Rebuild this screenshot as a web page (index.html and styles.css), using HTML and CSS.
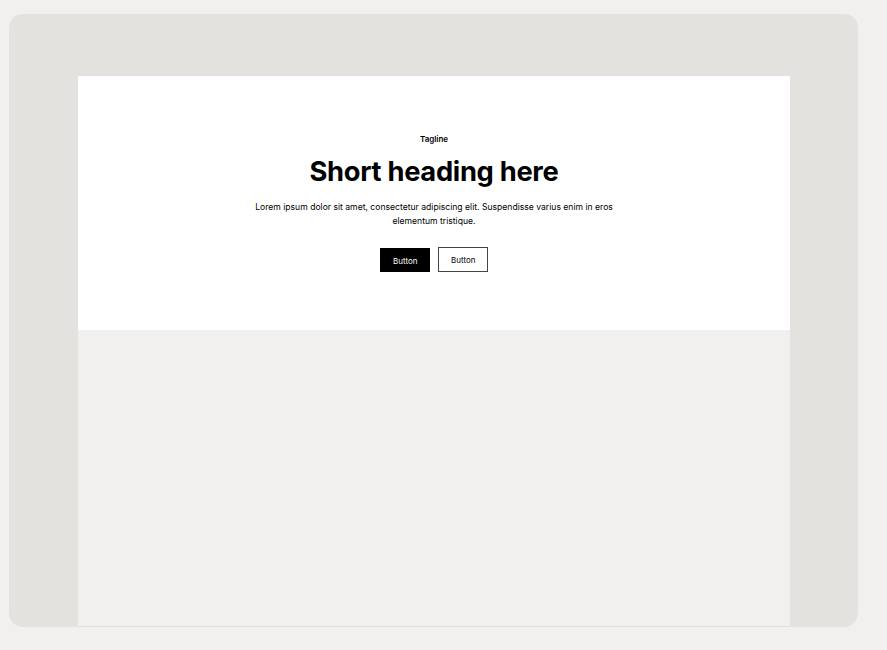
FILE: index.html
```html
<!DOCTYPE html>
<html>
<head>
<meta charset="utf-8">
<link rel="stylesheet" href="styles.css">
</head>
<body>
<div class="frame">
  <div class="page">
    <section class="hero">
      <p class="tagline">Tagline</p>
      <h1 class="title">Short heading here</h1>
      <p class="lead">Lorem ipsum dolor sit amet, consectetur adipiscing elit. Suspendisse varius enim in eros elementum tristique.</p>
      <div class="actions">
        <button class="btn btn-primary">Button</button>
        <button class="btn btn-outline">Button</button>
      </div>
    </section>
    <div class="rest"></div>
  </div>
</div>
</body>
</html>
```
FILE: styles.css
```css
html, body {
  margin: 0;
  padding: 0;
  background: #f1f0ee;
  font-family: Inter, "Noto Sans", sans-serif;
}
.frame {
  margin: 14px 29px 0 9px;
  height: 613px;
  background: #e3e2df;
  border-radius: 14px;
  padding: 62px 68px 0 69px;
  box-sizing: border-box;
  display: flex;
}
.page {
  flex: 1;
  display: flex;
  flex-direction: column;
}
.hero {
  background: #ffffff;
  height: 254px;
  display: flex;
  flex-direction: column;
  align-items: center;
  box-sizing: border-box;
  padding-top: 57px;
  text-align: center;
}
.tagline {
  margin: 0;
  font-size: 8px;
  font-weight: 600;
  line-height: 12px;
  color: #000;
}
.title {
  margin: 10px 0 0;
  font-size: 27.3px;
  font-weight: 700;
  line-height: 34px;
  letter-spacing: -0.3px;
  color: #000;
}
.lead {
  margin: 11px 0 0;
  max-width: 384px;
  font-size: 8.6px;
  line-height: 14px;
  color: #000;
}
.actions {
  margin-top: 20px;
  display: flex;
  gap: 8px;
}
.btn {
  font-family: Inter, "Noto Sans", sans-serif;
  font-size: 8px;
  line-height: 12px;
  padding: 6px 12px;
  height: 25px;
  width: 50px;
  box-sizing: border-box;
  border: 1px solid #000;
  border-radius: 0;
  cursor: pointer;
}
.btn-primary {
  background: #000;
  color: #fff;
  height: 24px;
}
.btn-outline {
  background: #fff;
  color: #000;
  border-color: #444;
  margin-top: -1px;
}
.rest {
  flex: 1;
  background: #f1f0ee;
  border-bottom: 1px solid #e0dfdc;
}
```
